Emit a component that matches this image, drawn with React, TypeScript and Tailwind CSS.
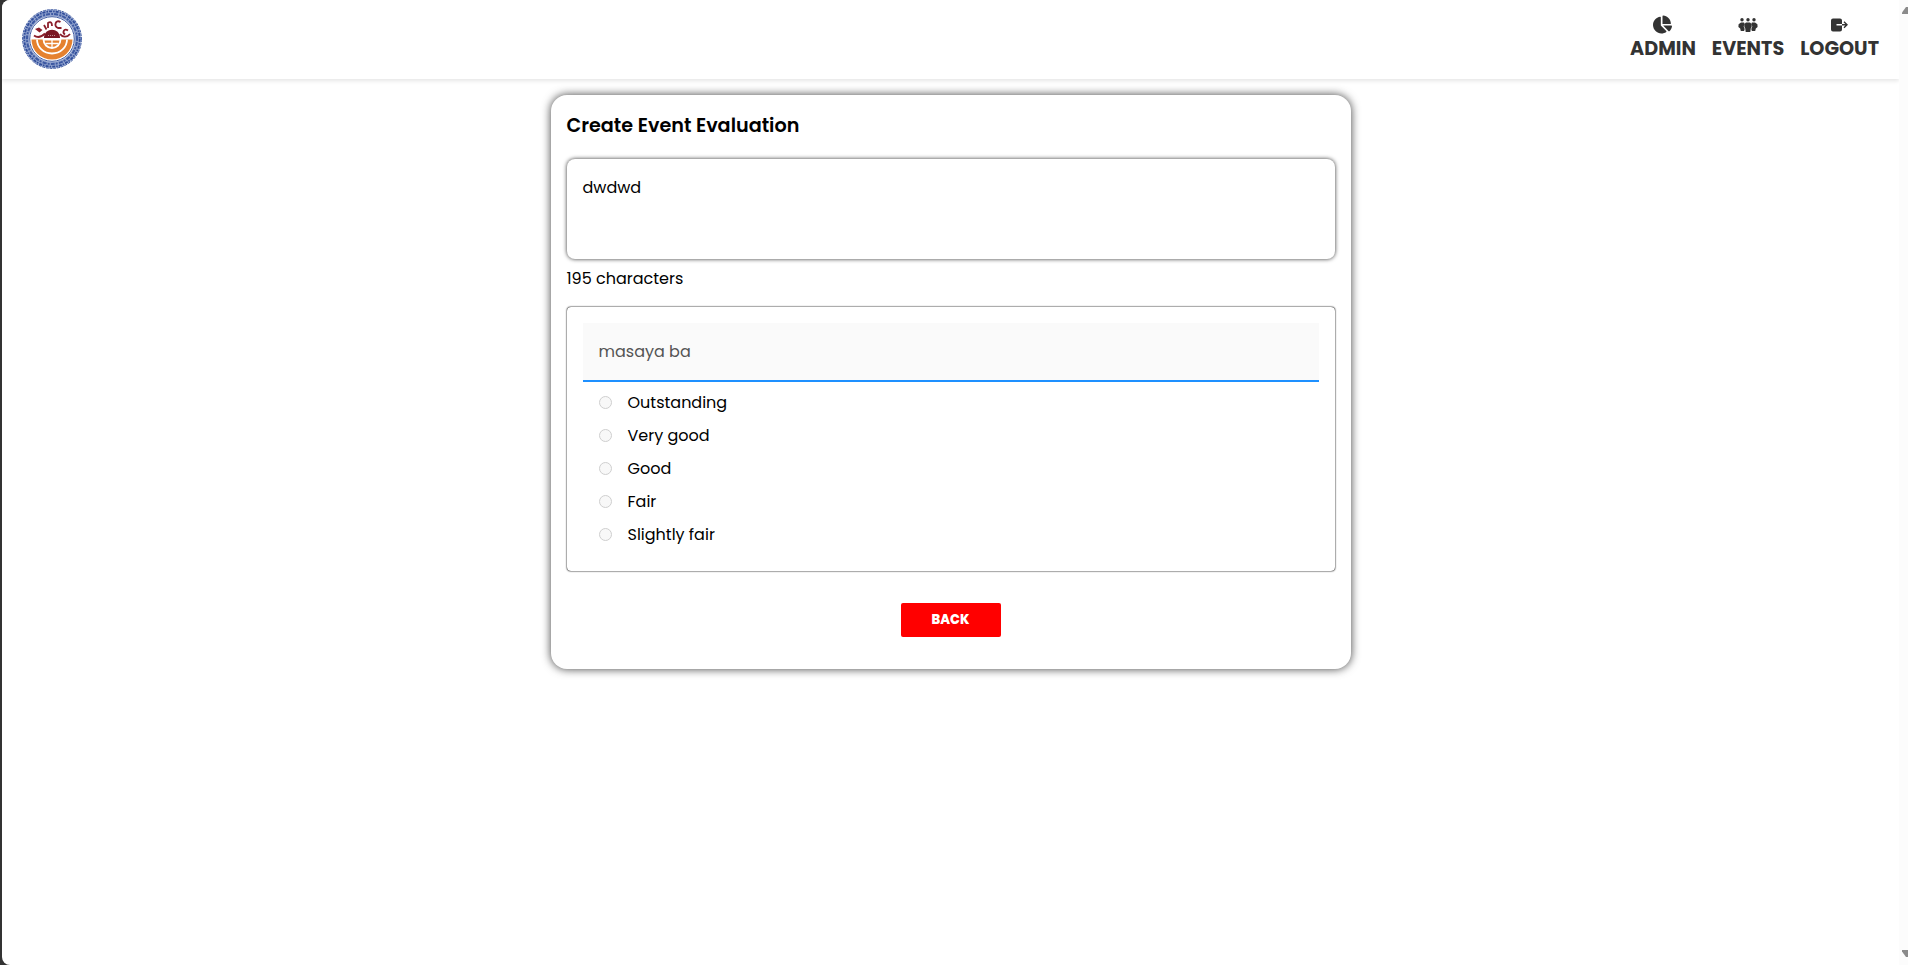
import { FaChartPie } from "react-icons/fa";
import type { ReactNode } from "react";

const options = ["Outstanding", "Very good", "Good", "Fair", "Slightly fair"];

function PeopleIcon() {
  return (
    <svg width="20" height="14" viewBox="0 0 20 14" fill="#333">
      <circle cx="4" cy="1.800" r="1.700" />
      <circle cx="10" cy="1.800" r="1.700" />
      <circle cx="16" cy="1.800" r="1.700" />
      <path d="M3 4.500h3l.6 1-.9 3 1 2.500-.6 2H2.800l-.6-2.500L.4 9 .6 6.300z" />
      <path d="M17 4.500h-3l-.6 1 .9 3-1 2.500.6 2h3.300l.6-2.500L19.600 9l-.2-2.700z" />
      <path d="M8 4.500h4l1.800 1.800-.2 2.700-.8 1.200-.5 3.800H7.700l-.5-3.800L6.400 9l-.2-2.700z" />
    </svg>
  );
}

function ExitIcon() {
  return (
    <svg width="17" height="14" viewBox="0 0 17 14">
      <path fill="#333" d="M2 .5h7a2 2 0 0 1 2 2V6H5.500v1.400H11V11.500a2 2 0 0 1-2 2H2a2 2 0 0 1-2-2v-9a2 2 0 0 1 2-2z" />
      <path fill="none" stroke="#333" strokeWidth="1.400" d="M11 6.700h4.800M13 3.700l3 3-3 3" />
    </svg>
  );
}

function NavItem({ icon, children }: { icon: ReactNode; children: string }) {
  return (
    <a className="flex flex-col items-center">
      <span className="flex h-[19px] items-center justify-center">{icon}</span>
      <span className="text-[19.2px] font-bold leading-[29px] text-[#333] whitespace-nowrap">{children}</span>
    </a>
  );
}

function Seal() {
  return (
    <svg width="60" height="60" viewBox="0 0 60 60">
      <circle cx="30" cy="30" r="29.500" fill="#fff" />
      <circle cx="30" cy="30" r="26" fill="none" stroke="#8fa1cd" strokeWidth="6" />
      <circle cx="30" cy="30" r="27.700" fill="none" stroke="#2f4c99" strokeWidth="1.800" strokeDasharray="3 1.200 1.500 1" />
      <circle cx="30" cy="30" r="25" fill="none" stroke="#3d59a2" strokeWidth="2" strokeDasharray="2 1 4 1.300" />
      <circle cx="30" cy="30" r="29.400" fill="none" stroke="#3b57a0" strokeWidth="1" strokeDasharray="3 .8" />
      <circle cx="30" cy="30" r="22.300" fill="#fff" stroke="#3b57a0" strokeWidth="1" />
      <path d="M9.500 30.500h41a20.500 20 0 0 1-41 0z" fill="#e5812f" />
      <path d="M15 30.500a15 14 0 0 0 30 0M21.500 30.500a8.500 8.500 0 0 0 17 0z" fill="none" stroke="#fff" strokeWidth="1.800" />
      <path d="M30 31v8M24 34.500h12" fill="none" stroke="#fff" strokeWidth="1.300" />
      <g fill="none" stroke="#8c1f2b" strokeWidth="1.800">
        <path d="M12 26.500c4 3 8 1 11-2M48 25c-3 4-8 3-10 0M22 16l2.500 4.500M26 19v-5c3-2 4 0 4 3M38.500 13c-5-3-7 4-2.500 6h3.500M46 21.500c-4-3-6 2-3 4" />
      </g>
      <path d="M13 20l4-1.500 3.500 2.500-3 2.500z" fill="#8c1f2b" />
      <path d="M22 29c0-11 16-11 16 0z" fill="#7a1824" />
      <path d="M26 26.500h8" stroke="#fff" strokeDasharray="1 1" opacity=".5" />
    </svg>
  );
}

export default function App() {
  return (
    <div className="flex h-[965px] w-full overflow-hidden bg-[#333] pl-[2px] font-['Poppins','Inter',sans-serif]">
      <div className="flex min-w-0 flex-1 overflow-hidden rounded-l-[8px] bg-white">
        <div className="flex min-w-0 flex-1 flex-col">
          <header className="flex h-[79px] shrink-0 items-start justify-between bg-white px-5 shadow-[0_2px_4px_rgba(0,0,0,0.1)]">
            <div className="pt-[9px]"><Seal /></div>
            <nav className="flex gap-4 pt-[15px]">
              <NavItem icon={<FaChartPie size={19} color="#333" />}>ADMIN</NavItem>
              <NavItem icon={<PeopleIcon />}>EVENTS</NavItem>
              <NavItem icon={<ExitIcon />}>LOGOUT</NavItem>
            </nav>
          </header>
          <main className="flex justify-center pt-4">
            <section className="h-[574px] w-[800px] rounded-2xl bg-white px-4 shadow-[0_0_10px_rgba(0,0,0,0.75)]">
              <h1 className="pt-4 text-[19.2px] font-semibold leading-[29px] text-black">Create Event Evaluation</h1>
              <div className="mt-[19px] h-[100px] rounded-lg px-4 pt-[17px] text-base text-black shadow-[0_0_4px_rgba(0,0,0,0.8)]">
                dwdwd
              </div>
              <p className="mt-2 text-base text-black">195 characters</p>
              <div className="mt-[16px] h-[264px] rounded-[4px] px-4 pt-4 shadow-[0_0_2px_#000,0_0_1px_rgba(0,0,0,0.8)]">
                <div className="flex h-[59px] items-center border-b-2 border-[#1e90ff] bg-[#fafafa] px-4 text-base text-[#545454]">
                  masaya ba
                </div>
                <ul className="pt-1">
                  {options.map((label) => (
                    <li key={label} className="flex h-[33px] items-center gap-4 pl-4 text-base text-black">
                      <span className="size-[13px] rounded-full border border-[#cfcfcf] bg-[#f8f8f8]" />
                      <span>{label}</span>
                    </li>
                  ))}
                </ul>
              </div>
              <div className="flex justify-center pt-8">
                <button className="flex h-[34px] w-[100px] items-center justify-center rounded-[2px] bg-[#ff0000] text-[13px] font-extrabold text-white">BACK</button>
              </div>
            </section>
          </main>
        </div>
        <div className="flex w-[9px] shrink-0 flex-col items-end justify-between bg-[#fcfcfc] pt-[7px] pb-[8px]">
          <svg width="6" height="7" viewBox="0 0 6 7"><path d="M0 7V5.500L4 0h2v7z" fill="#8b8b8b" /></svg>
          <svg width="6" height="7" viewBox="0 0 6 7"><path d="M0 0v1.500L4 7h2V0z" fill="#8b8b8b" /></svg>
        </div>
      </div>
    </div>
  );
}
